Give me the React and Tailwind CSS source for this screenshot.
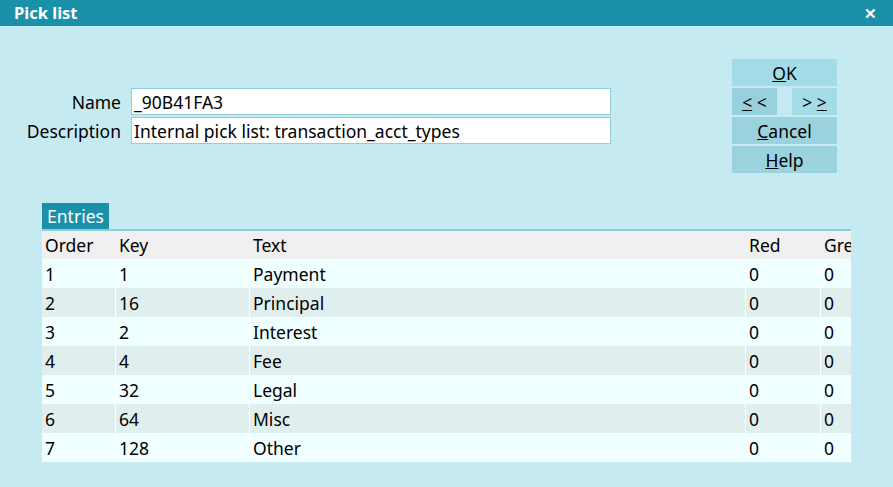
import React from 'react';

const ROWS = [
  ['1', '1', 'Payment'],
  ['2', '16', 'Principal'],
  ['3', '2', 'Interest'],
  ['4', '4', 'Fee'],
  ['5', '32', 'Legal'],
  ['6', '64', 'Misc'],
  ['7', '128', 'Other'],
];

const font = { fontFamily: '"Noto Sans", "Open Sans", sans-serif' };

export default function App() {
  return (
    <div className="w-[893px] h-[487px] bg-[#c5eaf2] text-[17.5px] text-black overflow-hidden" style={font}>
      {/* Title bar */}
      <div className="h-[26px] bg-[#1b90a9] flex items-center justify-between pl-[14px] pr-[16px]">
        <span className="text-white font-bold text-[16.5px] leading-none">Pick list</span>
        <span className="text-white font-bold text-[15px] leading-none">✕</span>
      </div>

      {/* Top section */}
      <div className="flex pt-[33px]">
        <div className="flex flex-col gap-[2px] pt-[29px]">
          <Field label="Name" value="_90B41FA3" />
          <Field label="Description" value="Internal pick list: transaction_acct_types" />
        </div>
        <div className="ml-[121px] w-[105px] flex flex-col gap-[2px]">
          <Btn className="bg-[#a3dce6]"><u>O</u>K</Btn>
          <div className="flex justify-between">
            <Btn className="w-[45px] bg-[#98d1dd]"><u>&lt;</u>&nbsp;&lt;</Btn>
            <Btn className="w-[45px] bg-[#a3dce6]">&gt;&nbsp;<u>&gt;</u></Btn>
          </div>
          <Btn className="bg-[#9ad2de]"><u>C</u>ancel</Btn>
          <Btn className="bg-[#9ad2de]"><u>H</u>elp</Btn>
        </div>
      </div>

      {/* Entries */}
      <div className="ml-[42px] mt-[30px] w-[809px]">
        <div className="w-[67px] h-[26px] bg-[#1b90a9] text-white flex items-center justify-center leading-none pt-[2px]">Entries</div>
        <div className="border-t-2 border-[#8fcfdd]">
          <div className="flex h-[28px] items-center bg-[#f0f0f0]">
            <Cell w="w-[74px]">Order</Cell>
            <Cell w="w-[134px]">Key</Cell>
            <Cell w="w-[496px]">Text</Cell>
            <Cell w="w-[75px]">Red</Cell>
            <Cell w="w-[30px]" clip>Green</Cell>
          </div>
          {ROWS.map((r, i) => (
            <div key={r[0]} className={`flex h-[29px] ${i % 2 ? 'bg-[#e0eeee]' : 'bg-[#f0ffff]'}`}>
              <Cell w="w-[74px]" line>{r[0]}</Cell>
              <Cell w="w-[134px]" line>{r[1]}</Cell>
              <Cell w="w-[496px]" line>{r[2]}</Cell>
              <Cell w="w-[75px]" line>0</Cell>
              <Cell w="w-[30px]" clip>0</Cell>
            </div>
          ))}
        </div>
      </div>
    </div>
  );
}

function Field({ label, value }) {
  return (
    <div className="flex items-center">
      <div className="w-[121px] text-right leading-none pt-[2px]">{label}</div>
      <div className="ml-[10px] w-[480px] h-[27px] bg-white border border-[#8fcfdd] flex items-center px-[2px] pt-[2px] leading-none">
        {value}
      </div>
    </div>
  );
}

function Btn({ children, className = '' }) {
  return (
    <div className={`h-[27px] flex items-center justify-center leading-none pt-[2px] ${className}`}>
      <span>{children}</span>
    </div>
  );
}

function Cell({ w, children, line, clip }) {
  return (
    <div
      className={`${w} h-full flex items-center pl-[3px] pt-[2px] leading-none shrink-0 whitespace-nowrap ${clip ? 'overflow-hidden' : ''} ${line ? 'border-r border-white' : ''}`}
    >
      {children}
    </div>
  );
}
